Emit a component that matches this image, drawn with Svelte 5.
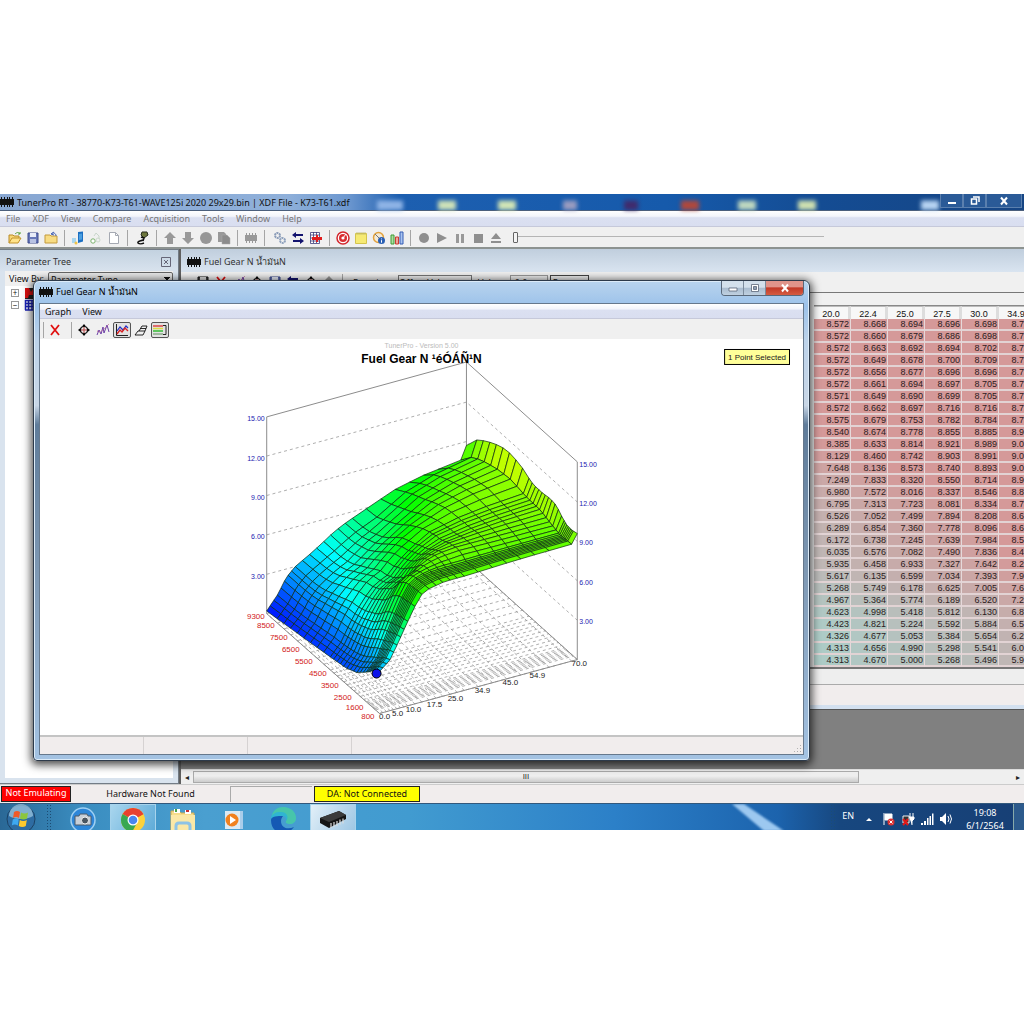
<script>
  const menus = ['File', 'XDF', 'View', 'Compare', 'Acquisition', 'Tools', 'Window', 'Help'];

  const toolGroups = [
    { icons: ['open', 'save', 'folder'] },
    { icons: ['compare', 'recycle', 'page'], wide: true },
    { icons: ['plug'] },
    { icons: ['up', 'down', 'disc', 'copy'] },
    { icons: ['chip'], wide: true },
    { icons: ['gears', 'swap', 'gridred'] },
    { icons: ['target', 'note', 'gauge', 'bars'] },
    { icons: ['record', 'play', 'pause', 'stop', 'eject'] }
  ];

  const headers = ['20.0', '22.4', '25.0', '27.5', '30.0', '34.9'];
  const cells = [
    [8.572, 8.668, 8.694, 8.696, 8.698, 8.727],
    [8.572, 8.66, 8.679, 8.686, 8.698, 8.727],
    [8.572, 8.663, 8.692, 8.694, 8.702, 8.727],
    [8.572, 8.649, 8.678, 8.7, 8.709, 8.727],
    [8.572, 8.656, 8.677, 8.696, 8.696, 8.716],
    [8.572, 8.661, 8.694, 8.697, 8.705, 8.727],
    [8.571, 8.649, 8.69, 8.699, 8.705, 8.716],
    [8.572, 8.662, 8.697, 8.716, 8.716, 8.727],
    [8.575, 8.679, 8.753, 8.782, 8.784, 8.784],
    [8.54, 8.674, 8.778, 8.855, 8.885, 8.967],
    [8.385, 8.633, 8.814, 8.921, 8.989, 9.064],
    [8.129, 8.46, 8.742, 8.903, 8.991, 9.091],
    [7.648, 8.136, 8.573, 8.74, 8.893, 9.017],
    [7.249, 7.833, 8.32, 8.55, 8.714, 8.967],
    [6.98, 7.572, 8.016, 8.337, 8.546, 8.827],
    [6.795, 7.313, 7.723, 8.081, 8.334, 8.716],
    [6.526, 7.052, 7.499, 7.894, 8.208, 8.627],
    [6.289, 6.854, 7.36, 7.778, 8.096, 8.627],
    [6.172, 6.738, 7.245, 7.639, 7.984, 8.527],
    [6.035, 6.576, 7.082, 7.49, 7.836, 8.464],
    [5.935, 6.458, 6.933, 7.327, 7.642, 8.267],
    [5.617, 6.135, 6.599, 7.034, 7.393, 7.967],
    [5.268, 5.749, 6.178, 6.625, 7.005, 7.627],
    [4.967, 5.364, 5.774, 6.189, 6.52, 7.217],
    [4.623, 4.998, 5.418, 5.812, 6.13, 6.827],
    [4.423, 4.821, 5.224, 5.592, 5.884, 6.527],
    [4.326, 4.677, 5.053, 5.384, 5.654, 6.267],
    [4.313, 4.656, 4.99, 5.298, 5.541, 6.017],
    [4.313, 4.67, 5.0, 5.268, 5.496, 5.927]
  ];

  function cellColor(v) {
    const t = Math.max(0, Math.min(1, (v - 4.2) / 4.3));
    const mix = (a, b, c) => (t < 0.4 ? a + ((b - a) * t) / 0.4 : b + ((c - b) * (t - 0.4)) / 0.6);
    return `rgb(${mix(172, 191, 213) | 0},${mix(205, 184, 153) | 0},${mix(200, 182, 153) | 0})`;
  }

  // Fuel surface: load runs along u, engine speed along v.
  const rpms = [800, 1100, 1200, 1300, 1400, 1500, 1600, 1700, 1800, 2000, 2250, 2500, 2750, 3000, 3250,
    3500, 3750, 4000, 4250, 4500, 5000, 5500, 6000, 6500, 7000, 7500, 8000, 8500, 9300];
  const loads = [0, 1.2, 2.5, 3.7, 5, 6.2, 7.5, 8.7, 10, 12.5, 15, 17.5, 20, 22.4, 25, 27.5, 30, 34.9,
    40, 45, 50, 54.9, 60, 68, 70];

  function lerp(points, x) {
    if (x <= points[0][0]) return points[0][1];
    for (let i = 1; i < points.length; i++) {
      if (x <= points[i][0]) {
        const [x0, y0] = points[i - 1];
        const [x1, y1] = points[i];
        return y0 + ((y1 - y0) * (x - x0)) / (x1 - x0);
      }
    }
    return points[points.length - 1][1];
  }

  const idle = [[0, 3.2], [0.05, 2.9], [0.1, 2.4], [0.2, 1.6], [0.3, 1.2], [0.6, 0.75], [1, 0.2]];
  const inner = [[0, 8.9], [0.1, 8.8], [0.19, 9.05], [0.28, 9.35], [0.41, 9.4], [0.55, 9.66], [0.68, 9.5],
    [0.82, 9.1], [0.91, 8.6], [1, 7.7]];
  const crest = [[0, 9.6], [0.045, 9.5], [0.09, 9.5], [0.135, 9.8], [0.19, 10.3], [0.24, 10.4], [0.31, 10.3],
    [0.38, 10.3], [0.42, 10.4], [0.51, 10.9], [0.6, 11.1], [0.69, 11], [0.78, 10.6], [0.87, 10.1], [0.95, 9.5], [1, 8.7]];
  const riseSlow = [[0, 0], [0.18, 0.12], [0.32, 0.32], [0.46, 0.54], [0.62, 0.78], [0.75, 0.93], [0.87, 0.98], [1, 1]];
  const riseFast = [[0, 0], [0.2, 0.26], [0.34, 0.52], [0.5, 0.68], [0.78, 0.85], [1, 1]];
  const far = [[0, 0], [0.3, 0.5], [0.6, 0.78], [1, 1]];
  const known = [20, 22.4, 25, 27.5, 30, 34.9];

  function height(load, row) {
    const v = (rpms[row] - 800) / 8500;
    if (load < 20) {
      const z0 = lerp(idle, v);
      const rise = lerp(riseSlow, load / 20) * (1 - v) + lerp(riseFast, load / 20) * v;
      return z0 + (cells[row][0] - z0) * rise;
    }
    if (load <= 34.9) return lerp(known.map((k, i) => [k, cells[row][i]]), load);
    if (load === 70) return lerp(crest, v);
    const z35 = cells[row][5];
    return z35 + (lerp(inner, v) - z35) * lerp(far, (load - 34.9) / 33.1);
  }

  function project(load, rpm, z) {
    const u = load / 70;
    const v = (rpm - 800) / 8500;
    const x = 379 + 198 * u - 113 * v + 2 * u * v;
    const y = 714 - 54 * u - 100 * v - 13.15 * z;
    return [Math.round(x * 10) / 10, Math.round(y * 10) / 10];
  }

  const quads = [];
  for (let r = rpms.length - 2; r >= 0; r--) {
    for (let c = loads.length - 2; c >= 0; c--) {
      const corners = [[c, r], [c + 1, r], [c + 1, r + 1], [c, r + 1]];
      const zs = corners.map(([i, j]) => height(loads[i], j));
      const z = (zs[0] + zs[1] + zs[2] + zs[3]) / 4;
      const hue = lerp([[0, 238], [1.5, 220], [3, 200], [4.2, 180], [5.5, 155], [7, 128], [8, 112], [9, 95], [10.2, 76], [11, 66]], z);
      quads.push({
        points: corners.map(([i, j], k) => project(loads[i], rpms[j], zs[k]).join(',')).join(' '),
        fill: `hsl(${hue.toFixed(0)} 100% 50%)`
      });
    }
  }

  const line = (a, b) => ({ x1: a[0], y1: a[1], x2: b[0], y2: b[1] });
  const floorLines = [
    ...rpms.map((r) => line(project(0, r, 0), project(70, r, 0))),
    ...loads.map((l) => line(project(l, 800, 0), project(l, 9300, 0)))
  ];
  const levels = [3, 6, 9, 12, 15];
  const rpmTicks = [
    ['9300', 264, 619], ['8500', 274, 628], ['7500', 287, 640], ['6500', 299, 652], ['5500', 312, 664],
    ['4500', 326, 676], ['3500', 338, 688], ['2500', 351, 700], ['1600', 363, 710], ['800', 374, 720]
  ];
  const loadTicks = [
    ['0.0', 384, 720], ['5.0', 397, 717], ['10.0', 413, 712], ['17.5', 434, 707], ['25.0', 455, 701],
    ['34.9', 482, 693], ['45.0', 510, 685], ['54.9', 537, 678], ['70.0', 579, 666]
  ];
  const blurs = [[390, 26, '#8fb4e6'], [447, 18, '#cfe2b8'], [507, 18, '#d2e6b6'], [570, 14, '#9a9cc0'], [631, 14, '#402b6c'],
    [690, 18, '#b0483c'], [747, 18, '#bfd8c0'], [807, 18, '#cfe0b0'], [930, 18, '#b7d4f2']];
</script>

{#snippet chipIcon()}
  <svg class="chip" viewBox="0 0 14 10" aria-hidden="true"><path d="M0 2h14v6H0z" /><path d="M1 0h1v10H1zM4 0h1v10H4zM7 0h1v10H7zM9 0h1v10H9zM12 0h1v10h-1z" /></svg>
{/snippet}

{#snippet icon(name)}
  <svg class="icon" viewBox="0 0 14 14" aria-hidden="true">
    {#if name === 'open'}
      <path d="M1 12V4h4l1 1h5v2" fill="#f7d774" stroke="#b98a26" /><path d="M1 12l3-5h9l-3 5z" fill="#ffe38a" stroke="#c2922a" /><path d="M7 3c2-2 4-2 5 0M12 1v2h-2" fill="none" stroke="#57a03a" />
    {:else if name === 'save'}
      <path d="M2 2h10v10H2z" fill="#6777b8" stroke="#3c4a8c" /><path d="M4 2h6v4H4z" fill="#e8ecf8" /><path d="M4 8h6v4H4z" fill="#b8c2e2" />
    {:else if name === 'savedark'}
      <path d="M2 2h10v10H2z" fill="#444" stroke="#111" /><path d="M4 2h6v4H4z" fill="#ddd" />
    {:else if name === 'folder'}
      <path d="M1 4h5l1 1h6v7H1z" fill="#f8dc83" stroke="#c39a3c" /><path d="M7 3c2-2 5-1 5 2M10 1L7 3l3 1" fill="none" stroke="#4763b4" />
    {:else if name === 'compare'}
      <path d="M7 1l5-.5v10L7 12z" fill="#1c6fc2" /><path d="M8 3l3-.5v6L8 9z" fill="#4b9fe0" /><path d="M1 7h4v5H1z" fill="#a9d6ee" /><circle cx="5" cy="12" r="1.5" fill="#efc348" />
    {:else if name === 'recycle'}
      <path d="M5 5l2-3 3 3v3" fill="none" stroke="#c9d6cb" /><circle cx="4" cy="10" r="2.2" fill="#fff" stroke="#79b16c" /><circle cx="9" cy="9" r="2" fill="none" stroke="#ccd9cc" />
    {:else if name === 'page'}
      <path d="M2.500 1.500h6l3 3v8h-9z" fill="#fff" stroke="#a5a9b2" /><path d="M8.500 1.500v3h3" fill="none" stroke="#a5a9b2" />
    {:else if name === 'plug'}
      <path d="M6 1h5l1 3-4 3-3-3z" fill="#6c763c" stroke="#262b1d" /><path d="M5 6l3 1-1 3" fill="none" stroke="#111" stroke-width="1.500" /><path d="M7 9c-2 1-6 1-5 3 1 1 4 1 6 0" fill="none" stroke="#111" stroke-width="1.500" />
    {:else if name === 'up'}
      <path d="M7 1l6 6h-3v6H4V7H1z" fill="#999" />
    {:else if name === 'down'}
      <path d="M7 13l6-6h-3V1H4v6H1z" fill="#999" />
    {:else if name === 'disc'}
      <circle cx="7" cy="7" r="6" fill="#979797" />
    {:else if name === 'record'}
      <circle cx="7" cy="7" r="5" fill="#8f8f8f" />
    {:else if name === 'copy'}
      <path d="M1 1h6l2 2v8H1z" fill="#999" /><path d="M5 4h5l3 3v6H5z" fill="#8c8c8c" stroke="#aaa" stroke-width=".5" />
    {:else if name === 'chip'}
      <path d="M1 4h12v6H1z" fill="#999" /><path d="M2.500 2v10M5.500 2v10M8.500 2v10M11.500 2v10" stroke="#999" />
    {:else if name === 'gears'}
      <circle cx="4.500" cy="4.500" r="2.500" fill="none" stroke="#8b9cb8" stroke-width="2" stroke-dasharray="2 .6" /><circle cx="9.500" cy="9.500" r="2.500" fill="none" stroke="#8fa2bd" stroke-width="2" stroke-dasharray="2 .6" />
    {:else if name === 'swap'}
      <path d="M5 1v2h7v2H5v2L1 4zM9 7v2H2v2h7v2l4-3z" fill="#13136e" />
    {:else if name === 'gridred'}
      <path d="M1.500 1.500h9v11h-9zM1.500 4h9M1.500 7h9M1.500 10h9M4.500 1v11M7.500 1v11" fill="#fff" stroke="#3b3b78" stroke-width=".8" /><path d="M3 6h4V4h2v2h4v3H9v2H7V9H3z" fill="#e01c1c" />
    {:else if name === 'target'}
      <circle cx="7" cy="7" r="6" fill="#fff" stroke="#d3262b" stroke-width="1.500" /><circle cx="7" cy="7" r="4" fill="#d92d30" /><circle cx="7" cy="7" r="1.600" fill="#fff" /><path d="M7 7l3-4" stroke="#fff" />
    {:else if name === 'note'}
      <path d="M1.500 2.500h11v10h-11z" fill="#f6ea73" stroke="#d4c44c" /><path d="M3 1v3M5 1v3M7 1v3M9 1v3M11 1v3" stroke="#bdb76a" stroke-width=".8" />
    {:else if name === 'gauge'}
      <circle cx="6.500" cy="6.500" r="5" fill="#f4ead6" stroke="#e2a23d" stroke-width="1.500" /><path d="M3 3l5 5" stroke="#777" /><circle cx="9.500" cy="9.500" r="3.500" fill="#2a60b4" /><path d="M9.500 7.500v.8M9.500 9.200v2.500" stroke="#fff" />
    {:else if name === 'bars'}
      <path d="M1 4h3v9H1z" fill="#aadf9e" stroke="#3e9a34" /><path d="M5.500 6h3v7h-3z" fill="#f0a49a" stroke="#ca3d31" /><path d="M10 1h3v12h-3z" fill="#a9c4f0" stroke="#345cb4" />
    {:else if name === 'play'}
      <path d="M2 2l10 5-10 5z" fill="#8f8f8f" />
    {:else if name === 'pause'}
      <path d="M3 3h3v9H3zM8 3h3v9H8z" fill="#999" />
    {:else if name === 'stop'}
      <path d="M3 3h9v9H3z" fill="#8f8f8f" />
    {:else if name === 'eject'}
      <path d="M7 2l5 6H2zM2 10h10v2H2z" fill="#8f8f8f" />
    {:else if name === 'redx'}
      <path d="M3 2l8 10M11 2L3 12" stroke="#e01010" stroke-width="1.800" />
    {:else if name === 'move'}
      <circle cx="7" cy="7" r="3.500" fill="none" stroke="#111" stroke-width="1.200" /><path d="M7 4v6M4 7h6" stroke="#b34040" /><path d="M7 1l2 2.500H5zM7 13l2-2.500H5zM1 7l2.500-2v4zM13 7l-2.500-2v4z" fill="#000" />
    {:else if name === 'scribble'}
      <path d="M1 12l2-5 2 4 2-7 1 6 3-8 2 7" fill="none" stroke="#6c3fa6" /><path d="M1 8l3 1 3-2 3-3 3-3" fill="none" stroke="#c26a96" stroke-dasharray="1 1" />
    {:else if name === 'chart'}
      <path d="M1.500 1v11.500H13" fill="none" stroke="#222" /><path d="M2 8l3-4 3 3 3-4 2 2" fill="none" stroke="#2130c8" stroke-width="1.200" /><path d="M2 11l3-4 2 2 3-4 3 3" fill="none" stroke="#d82222" stroke-width="1.400" />
    {:else if name === 'plane'}
      <path d="M1 12l3-4h7l-2 4zM5 8l3-5h5l-2 5M6.500 5.500H12" fill="none" stroke="#111" stroke-width=".9" />
    {:else if name === 'legend'}
      <path d="M0 3h10" stroke="#d44" stroke-width="1.500" /><path d="M0 5.500h10" stroke="#dd4" stroke-width="1.500" /><path d="M0 8h10" stroke="#3b3" stroke-width="1.500" /><path d="M0 11h10" stroke="#8a8" stroke-width="1.500" /><path d="M10 2.500h3v9h-3" fill="none" stroke="#222" />
    {/if}
  </svg>
{/snippet}

<main class="page">
  <div class="screen">
    <header class="titlebar">
      <svg class="wallpaper" viewBox="0 0 1024 17" preserveAspectRatio="none" aria-hidden="true">
        {#each blurs as [x, w, fill]}
          <rect x={x - w / 2} y="7" width={w} height="12" {fill} />
        {/each}
      </svg>
      {@render chipIcon()}
      <h1>TunerPro RT - 38770-K73-T61-WAVE125i 2020 29x29.bin | XDF File - K73-T61.xdf</h1>
      <div class="caption-buttons">
        <button aria-label="Minimize"><svg viewBox="0 0 12 10"><path d="M2 6h8v2H2z" fill="#fff" /></svg></button>
        <button aria-label="Restore"><svg viewBox="0 0 12 10"><path d="M4 1h6v5M2.500 3h5v5h-5z" fill="none" stroke="#fff" stroke-width="1.500" /></svg></button>
        <button class="big" aria-label="Close"><svg viewBox="0 0 12 10"><path d="M3 1.500l6 7M9 1.500l-6 7" stroke="#fff" stroke-width="2" /></svg></button>
      </div>
    </header>

    <nav class="menubar main-menu" aria-label="Main">
      {#each menus as m}<button>{m}</button>{/each}
    </nav>

    <div class="toolbar main-tools">
      {#each toolGroups as g, i}
        {#if i > 0}<span class="sep" class:wide={toolGroups[i - 1].wide}></span>{/if}
        {#each g.icons as name}<button class="tool" aria-label={name}>{@render icon(name)}</button>{/each}
      {/each}
      <input class="seek" type="range" min="0" max="100" value="0" aria-label="Playback position" />
    </div>

    <div class="workspace">
      <aside class="tree">
        <div class="tree-head"><h2>Parameter Tree</h2><button aria-label="Close panel"><svg viewBox="0 0 10 10"><path d="M.5.5h9v9h-9zM3 3l4 4M7 3L3 7" fill="none" stroke="#667" /></svg></button></div>
        <div class="tree-body">
          <div class="view-by">
            <label for="viewby">View By:</label>
            <select id="viewby"><option>Parameter Type</option></select>
          </div>
          <ul>
            <li><span class="box">+</span><svg viewBox="0 0 14 12"><path d="M1 1h10v11H1z" fill="#222" /><path d="M1 1h4l2 4 2-3v6H5l-1 3H1z" fill="#d11" /></svg></li>
            <li><span class="box">−</span><svg viewBox="0 0 14 12"><path d="M1 1h12v11H1z" fill="#fff" /><path d="M1 1.500h12M1 4.500h12M1 7.500h12M1 11h12M1.500 1v10M4.500 1v10M8 1v10M11 1v10" stroke="#1b23b8" stroke-width="1.500" /></svg></li>
          </ul>
        </div>
      </aside>

      <section class="mdi">
        <div class="child">
          <div class="child-title">{@render chipIcon()}<h2>Fuel Gear N น้ำมันN</h2></div>
          <div class="toolbar child-tools">
            {#each ['savedark', 'redx', 'scribble', 'move', 'save', 'swap', 'move', 'up'] as name}
              <button class="tool" aria-label={name}>{@render icon(name)}</button>
            {/each}
            <span class="sep"></span>
            <label for="fn">Function:</label>
            <select id="fn"><option>Offset Value</option></select>
            <label for="val">Value:</label>
            <input id="val" value="0.0" />
            <button class="exec">Execute</button>
          </div>
          <div class="table-wrap">
            <table>
              <thead><tr>{#each headers as h}<th>{h}</th>{/each}</tr></thead>
              <tbody>
                {#each cells as row}
                  <tr>{#each row as v}<td style:background={cellColor(v)}>{v.toFixed(3)}</td>{/each}</tr>
                {/each}
              </tbody>
            </table>
          </div>
          <div class="child-foot"></div>
          <div class="child-status"></div>
        </div>
        <div class="hscroll" aria-hidden="true"><span class="arrow">◂</span><span class="thumb">ııı</span><span class="arrow end">▸</span></div>
      </section>
    </div>

    <footer class="status">
      <span class="emu">Not Emulating</span>
      <span class="hw">Hardware Not Found</span>
      <span class="empty"></span>
      <span class="da">DA: Not Connected</span>
    </footer>

    <div class="taskbar">
      <svg class="streak" viewBox="0 0 140 27" aria-hidden="true"><path d="M52 0h12l40 27H84z" fill="#9cc8f0" /></svg>
      <button class="orb" aria-label="Start">
        <svg viewBox="0 0 30 30">
          <circle cx="15" cy="15" r="14" fill="#2e6ca2" stroke="#1c4265" /><path d="M3 12a12 12 0 0 1 24 0c-6 4-18 4-24 0z" fill="#9cc6df" opacity=".75" />
          <path d="M8 8c2-1.500 4-1.500 6 0l-1 6c-2-1.300-4-1.300-6 0z" fill="#ef5a29" /><path d="M15 8.500c2 1.300 5 1.300 7 0l-1 6c-2 1.300-5 1.300-7 0z" fill="#8cc63e" />
          <path d="M6.800 15.500c2-1.300 4-1.300 6 0l-1 6c-2-1.300-4-1.300-6 0z" fill="#3fa9f0" /><path d="M13.800 16c2 1.300 5 1.300 7 0l-1 6c-2 1.300-5 1.300-7 0z" fill="#fdc92e" />
        </svg>
      </button>
      <span class="grip"></span>
      <div class="tasks">
        <button aria-label="Camera">
          <svg viewBox="0 0 30 30"><circle cx="15" cy="15" r="12" fill="#2d86d8" stroke="#9fd0f2" stroke-width="1.500" /><path d="M7 11h4l1-2h7l1 2h3v9H7z" fill="#c7cfd8" stroke="#4d5a68" /><circle cx="17" cy="15.500" r="3.500" fill="#4b5661" stroke="#eee" /></svg>
        </button>
        <button class="active" aria-label="Chrome">
          <svg viewBox="0 0 30 30"><circle cx="15" cy="15" r="12" fill="#fdd23c" /><path d="M15 15L4.600 9A12 12 0 0 1 25.400 9z" fill="#e8412f" /><path d="M15 15L4.600 9a12 12 0 0 0 9.400 18l5-9z" fill="#38a852" /><path d="M14 9h11.400L15 15z" fill="#e8412f" /><circle cx="15" cy="15" r="5.500" fill="#fff" /><circle cx="15" cy="15" r="4.300" fill="#4a86ee" /></svg>
        </button>
        <button aria-label="Explorer">
          <svg viewBox="0 0 30 30"><path d="M3 6h8l2 2h13v22H3z" fill="#f5dc8b" stroke="#d1ac52" /><path d="M6 4h6v4H6zM17 5h6v4h-6z" fill="#fff" /><path d="M7 4h2v3H7z" fill="#48a34a" /><path d="M18 5h3v2h-3z" fill="#c33" /><path d="M3 10h24v16H3z" fill="#fbe8a7" /><path d="M8 28v-7q0-3 3-3h8q3 0 3 3v7" fill="none" stroke="#8ec3e6" stroke-width="3" /></svg>
        </button>
        <button aria-label="Media Player">
          <svg viewBox="0 0 30 30"><path d="M11 6h14v18H11z" fill="#a9cdea" /><path d="M7 6h15v18H7z" fill="#dceaf4" /><circle cx="14" cy="15" r="6.500" fill="#f0811f" /><path d="M12 11l6 4-6 4z" fill="#fff" /></svg>
        </button>
        <button aria-label="Edge">
          <svg viewBox="0 0 30 30"><path d="M3 15C3 7 8 2 15 2c8 0 13 5 13 11 0 4-3 6-6 6-3 0-5-1-4-3 1-2 0-5-4-5-5 0-10 4-8 11z" fill="#2fb5d2" /><path d="M15 2c8 0 13 5 13 11 0 4-3 6-6 6-3 0-5-1-4-3 3-3 2-10-7-9-3 0-6 2-7 4C5 5 10 2 15 2z" fill="#4dc9a0" opacity=".8" /><path d="M3 15c0 9 6 13 12 13 5 0 9-3 11-6-6 3-13 1-13-6 0-2 1-4 2-5-5 0-12 0-12 4z" fill="#1559b4" /></svg>
        </button>
        <button class="active strong" aria-label="TunerPro">
          <svg viewBox="0 0 30 30"><path d="M2 13L21 6l7 4v4L11 23l-9-5z" fill="#151515" /><path d="M2 13L21 6l7 4-17 7z" fill="#3b3b3b" /><path d="M13 18v5M16 17v5M19 16v5M22 14.500v5M25 13.500v5" stroke="#ddd" stroke-width="1.200" /></svg>
        </button>
      </div>
      <div class="tray">
        <span class="grip"></span>
        <span class="lang">EN</span>
        <svg class="tri" viewBox="0 0 8 8"><path d="M1 6h6L4 3z" fill="#fff" /></svg>
        <svg viewBox="0 0 14 14"><path d="M2 1v12M3 2h7v6H3z" fill="#fff" stroke="#fff" /><circle cx="9" cy="10" r="3.500" fill="#d33" /><path d="M7.500 8.500l3 3M10.500 8.500l-3 3" stroke="#fff" /></svg>
        <svg viewBox="0 0 14 14"><path d="M2 4h6v7H2z" fill="#333" stroke="#eee" /><path d="M9 1v4M12 1v4M8 5h5v2l-2 2v4" fill="#fff" stroke="#fff" /><path d="M2 7l5 6M7 7l-5 6" stroke="#e01818" stroke-width="2" /></svg>
        <svg viewBox="0 0 14 14"><path d="M1 11h2v2H1zM4 9h2v4H4zM7 6h1.500v7H7zM9.500 4H11v9H9.500zM12 1.500h1.500V13H12z" fill="#fff" /></svg>
        <svg viewBox="0 0 14 14"><path d="M1 5h2l4-4v12L3 9H1z" fill="#fff" /><path d="M9 4q2 3 0 6M11 2.500q3 4.500 0 9" fill="none" stroke="#fff" /></svg>
        <time><span>19:08</span><span>6/1/2564</span></time>
        <span class="peek"></span>
      </div>
    </div>

    <section class="window">
      <div class="window-title">
        {@render chipIcon()}
        <h2>Fuel Gear N น้ำมันN</h2>
        <div class="win-buttons">
          <button aria-label="Minimize"><svg viewBox="0 0 12 10"><path d="M2 5h8v3H2z" fill="#fff" stroke="#5a6678" stroke-width=".8" /></svg></button>
          <button aria-label="Maximize"><svg viewBox="0 0 12 10"><path d="M2.500 1.500h7v7h-7z" fill="#fff" stroke="#5a6678" stroke-width=".8" /><path d="M4.500 3.500h3v3h-3z" fill="#8fa0b4" stroke="#5a6678" stroke-width=".8" /></svg></button>
          <button class="close" aria-label="Close"><svg viewBox="0 0 12 10"><path d="M3 1.500l6 7M9 1.500l-6 7" stroke="#fff" stroke-width="2" /></svg></button>
        </div>
      </div>
      <div class="window-body">
        <nav class="menubar" aria-label="Graph"><button>Graph</button><button>View</button></nav>
        <div class="toolbar graph-tools">
          <span class="sep"></span>
          <button class="tool" aria-label="Close graph">{@render icon('redx')}</button>
          <span class="sep far"></span>
          <button class="tool" aria-label="Move">{@render icon('move')}</button>
          <button class="tool" aria-label="Trace">{@render icon('scribble')}</button>
          <button class="tool pressed" aria-label="Lines">{@render icon('chart')}</button>
          <button class="tool" aria-label="Plane">{@render icon('plane')}</button>
          <button class="tool pressed" aria-label="Legend">{@render icon('legend')}</button>
        </div>
        <svg class="plot" viewBox="39 339 764 397" role="img" aria-label="Fuel Gear N surface">
          <g class="grid">
            {#each floorLines as l}<line {...l} />{/each}
            {#each levels.slice(0, 4) as z}
              {@const a = project(0, 9300, z)}{@const b = project(70, 9300, z)}{@const c = project(70, 800, z)}
              <polyline points="{a} {b} {c}" />
            {/each}
          </g>
          <path class="frame" d="M266 614V417L466 362L577 462V660L379 714L266 614M466 362V560L577 660" />
          <g class="mesh">{#each quads as q}<polygon points={q.points} fill={q.fill} />{/each}</g>
          <circle cx="376" cy="674" r="4.500" fill="#0b12e8" stroke="#000" />
          <g class="zt">
            {#each levels as z}
              <text x="264" y={618.500 - z * 13.150} text-anchor="end">{z.toFixed(2)}</text>
              <text x="579" y={664 - z * 13.150}>{z.toFixed(2)}</text>
            {/each}
          </g>
          <g class="rt">{#each rpmTicks as [t, x, y]}<text {x} {y} text-anchor="end">{t}</text>{/each}</g>
          <g class="lt">{#each loadTicks as [t, x, y]}<text {x} {y} text-anchor="middle">{t}</text>{/each}</g>
          <text class="mark" x="421" y="348" text-anchor="middle">TunerPro - Version 5.00</text>
          <text class="name" x="421" y="363" text-anchor="middle">Fuel Gear N ¹éÓÁÑ¹N</text>
          <rect x="724.500" y="349.500" width="65" height="15" fill="#ffff99" stroke="#000" />
          <text class="sel" x="757" y="360" text-anchor="middle">1 Point Selected</text>
        </svg>
        <div class="window-status"><span></span><span></span><span></span><i></i></div>
      </div>
    </section>
  </div>
</main>

<style>
  :global(body) { margin: 0; background: #fff; }
  .page { min-height: 100vh; display: flex; align-items: center; font-family: "Noto Sans", "Open Sans", sans-serif; font-size: 9px; color: #111; }
  .page * { box-sizing: border-box; }
  button, select, input { font: inherit; color: inherit; padding: 0; margin: 0; border: 0; background: none; border-radius: 0; }
  h1, h2 { margin: 0; font-size: 9px; font-weight: 400; white-space: nowrap; }
  svg { display: block; }
  .screen { position: relative; flex: 1; min-width: 0; overflow: hidden; display: flex; flex-direction: column; }

  .titlebar { position: relative; height: 17px; display: flex; align-items: center; gap: 3px; border-bottom: 1px solid #4b5f7c; background: linear-gradient(90deg, #88a7d2 0, #8fb0da 28%, #6c97cf 34%, #1d5fb0 39%, #165aab 65%, #144c93 80%, #164584 100%); }
  .wallpaper { position: absolute; inset: 0; width: 100%; height: 100%; filter: blur(2px); }
  .titlebar > .chip, .titlebar h1, .caption-buttons { position: relative; }
  .chip { width: 14px; height: 10px; flex: none; fill: #111; }
  .caption-buttons { margin-left: auto; align-self: flex-start; display: flex; margin-right: 2px; }
  .caption-buttons button { width: 23px; height: 14px; display: grid; place-items: center; border: 1px solid #5a7fae; border-top: 0; background: #2a5a97; }
  .caption-buttons .big { width: 36px; }
  .caption-buttons svg, .win-buttons svg { width: 12px; height: 10px; }

  .menubar { display: flex; align-items: center; height: 15px; background: linear-gradient(#fff 0, #f3f5fb 35%, #dbe0f1 45%, #d9def0); border-bottom: 1px solid #c6c9da; }
  .main-menu { height: 16px; gap: 12px; padding-left: 6px; color: #777; }
  .toolbar { display: flex; align-items: center; background: #f0f0f0; }
  .main-tools { height: 22px; padding: 1px 200px 0 6px; border-bottom: 2px solid #8d9391; }
  .tool { width: 18px; height: 16px; flex: none; display: grid; place-items: center; }
  .icon { width: 14px; height: 14px; }
  .sep { width: 9px; height: 16px; flex: none; background: linear-gradient(90deg, #a5a5a5 0 1px, transparent 0) 4px 0 no-repeat; }
  .sep.wide { width: 11px; }
  .seek { appearance: none; flex: 1; min-width: 0; margin-left: 8px; height: 14px; background: linear-gradient(#b5b5b5, #b5b5b5) 0 5px / 100% 1px no-repeat; }
  .seek::-webkit-slider-thumb { appearance: none; width: 5px; height: 11px; border: 1px solid #666; border-radius: 1px; background: #f4f4f4; }

  .workspace { display: flex; height: 535px; }
  .tree { width: 179px; flex: none; display: flex; flex-direction: column; background: linear-gradient(#c3d2e0, #d9e3ee 22px); border: 1px solid #737c86; border-left: 0; padding: 0 5px 5px; }
  .tree-head { height: 21px; padding: 2px 2px 0 1px; display: flex; justify-content: space-between; align-items: center; color: #333; }
  .tree-head svg { width: 10px; height: 10px; }
  .tree-body { flex: 1; background: #fff; }
  .view-by { display: flex; align-items: center; gap: 4px; height: 15px; padding-left: 4px; background: #f0f0f0; white-space: nowrap; }
  select { appearance: none; }
  .view-by select { flex: 1; min-width: 0; height: 13px; border: 1px solid #666; border-radius: 2px; padding-left: 2px; background: linear-gradient(to bottom left, #111 50%, transparent 50%) right 5px top 4px / 3px 4px no-repeat, linear-gradient(to bottom right, #111 50%, transparent 50%) right 2px top 4px / 3px 4px no-repeat, #e6e6e6; }
  ul { list-style: none; margin: 0; padding: 1px 0 0 6px; }
  li { display: flex; align-items: center; height: 12px; gap: 5px; }
  li svg { width: 14px; height: 12px; }
  .box { width: 8px; height: 8px; border: 1px solid #999; line-height: 5px; font-size: 8px; text-align: center; }

  .mdi { flex: 1; min-width: 0; display: flex; flex-direction: column; background: #808080; border-left: 2px solid #606060; }
  .child { border-bottom: 1px solid #555; background: #f0f0f0; overflow: hidden; }
  .child-title { height: 23px; padding: 3px 6px 0; display: flex; align-items: center; gap: 3px; color: #333; background: linear-gradient(#c0cedd, #d9e4f0); }
  .child-tools { height: 21px; padding-left: 13px; border-bottom: 1px solid #777; }
  .child-tools label { margin: 0 6px; color: #222; }
  .child-tools select { width: 74px; height: 14px; border: 1px solid #777; }
  .child-tools input { width: 38px; height: 14px; border: 1px solid #999; padding-left: 4px; }
  .exec { width: 39px; height: 14px; border: 1px solid #444; margin-left: 2px; }
  .table-wrap { padding: 12px 0 0 633px; border-bottom: 2px solid #777; }
  table { border-collapse: separate; border-spacing: 0; table-layout: fixed; width: 222px; font: 9px/10px "Liberation Sans", sans-serif; border-top: 1px solid #888; }
  th { height: 13px; padding: 2px 0 0; font-weight: 400; text-align: center; border-top: 1px solid #bbb; background: #f7f7f7; border-right: 3px solid #ddd; line-height: 9px; }
  td { height: 12px; padding: 0 1px 0 0; text-align: right; border-right: 1px solid #e6d9da; border-bottom: 2px solid #e2d3d4; color: #2c1b1d; }
  .child-foot { height: 16px; border-bottom: 1px solid #aaa; background: #eee; }
  .child-status { height: 24px; background: #f1eded; border-bottom: 4px solid #d3e0ef; }
  .hscroll { margin-top: auto; height: 15px; display: flex; align-items: center; background: #efefef; border-top: 1px solid #ddd; color: #222; font-family: "DejaVu Sans", sans-serif; font-size: 8px; }
  .hscroll .arrow { width: 12px; text-align: center; }
  .hscroll .arrow.end { margin-left: auto; }
  .thumb { width: 79%; height: 12px; line-height: 9px; text-align: center; border: 1px solid #aaa; background: linear-gradient(#eee 40%, #ccc); }

  .status { height: 19px; display: flex; align-items: flex-start; padding: 1px 0 0 1px; background: #f1eded; border-top: 1px solid #ccc; }
  .status span { height: 16px; line-height: 14px; text-align: center; white-space: nowrap; flex: none; }
  .status .emu { width: 70px; background: #f00; color: #fff; border: 1px solid #222; line-height: 12px; }
  .status .hw { width: 159px; line-height: 16px; }
  .empty { width: 82px; border: 1px solid #aaa; border-width: 1px 0 0 1px; margin-right: 2px; }
  .da { width: 106px; background: #ff0; border: 1px solid #222; }

  .taskbar { position: relative; height: 27px; display: flex; overflow: hidden; border-top: 1px solid #32587c; background: linear-gradient(90deg, #2a6896 0, #3a8dc0 8%, #4a9fd0 20%, #419bd0 40%, #2c80c8 60%, #1c63ad 76%, #17477f 82%, #173f75 100%); color: #fff; }
  .streak { position: absolute; left: 680px; top: 0; width: 140px; height: 27px; filter: blur(1px); }
  .taskbar button { display: flex; justify-content: center; flex: none; }
  .taskbar button svg { width: 30px; height: 30px; }
  .orb { width: 42px; }
  .grip { width: 7px; height: 26px; flex: none; background: radial-gradient(circle, #1c4c74 1px, transparent 1px) 0 0 / 3px 3px; }
  .orb + .grip { margin: 0 7px 0 4px; }
  .tasks { display: flex; gap: 4px; }
  .tasks button { width: 46px; height: 27px; border: 1px solid transparent; }
  .tasks .active { border-color: #a6d3ec; background: linear-gradient(120deg, #a9d6ee, #5fabd8); }
  .tasks .strong { background: linear-gradient(120deg, #e2eff8, #9ec7e4); }
  .tray { position: relative; margin-left: auto; display: flex; align-items: center; gap: 5px; }
  .tray svg { width: 14px; height: 14px; margin-top: 4px; }
  .tray .tri { width: 8px; height: 8px; margin-right: 4px; }
  .lang { margin-right: 6px; margin-bottom: 3px; }
  time { width: 46px; margin-left: 4px; display: flex; flex-direction: column; text-align: center; line-height: 13px; padding-top: 3px; }
  .peek { width: 11px; height: 27px; border-left: 1px solid #8aa; background: #2c5a8c; }

  .window { position: absolute; left: 33px; right: 214px; top: 86px; padding: 0 5px 5px; border: 1px solid #2d3a4a; border-radius: 6px 6px 4px 4px; background: linear-gradient(#b9d4ee 0, #9cc2ea 25px, #bdd3ea 60px, #c8d6e6 26%, #5f7c9a 30%, #7e98b3 60%, #a4c3e3 100%); box-shadow: 0 2px 9px 2px rgba(0, 0, 0, .7), inset 0 0 0 1px #dcebf8; }
  .window-title { height: 22px; display: flex; align-items: center; gap: 3px; color: #000; }
  .win-buttons { margin-left: auto; align-self: flex-start; display: flex; border: 1px solid #59687a; border-top: 0; border-radius: 0 0 4px 4px; overflow: hidden; }
  .win-buttons button { width: 22px; height: 14px; display: grid; place-items: center; background: linear-gradient(#d3e0ec 45%, #a9bccf 50%, #c0d0e0); border-right: 1px solid #7c8b9c; }
  .win-buttons .close { width: 37px; border: 0; background: linear-gradient(#e0948a 40%, #c23a28 50%, #d55c42); }
  .window-body { border: 1px solid #66788c; background: #fff; }
  .window-body .menubar { gap: 11px; padding-left: 5px; }
  .graph-tools { height: 20px; gap: 1px; padding-top: 1px; }
  .graph-tools .sep { width: 5px; background-position: 3px 0; }
  .graph-tools .far { width: 9px; background-position: 6px 0; }
  .graph-tools .pressed { border: 1px solid #555; border-radius: 2px; background: #e2e2e2; }
  .plot { width: 100%; font-family: "Liberation Sans", sans-serif; font-size: 8px; }
  .grid { fill: none; stroke: #999; stroke-width: .8; stroke-dasharray: 3 3; }
  .frame { fill: none; stroke: #8c8c8c; stroke-width: 1; }
  .mesh { stroke: #0a2a10; stroke-width: .7; stroke-linejoin: round; }
  .zt { fill: #1a1ab0; font-size: 7px; }
  .rt { fill: #d22020; }
  .lt { fill: #222; }
  .mark { fill: #bbb; font-size: 7px; }
  .name { fill: #000; font-size: 12px; font-weight: 700; }
  .sel { fill: #222; }
  .window-status { position: relative; display: flex; height: 19px; border-top: 2px solid #c4c4c4; background: #f1eded; }
  .window-status span { width: 104px; border-right: 1px solid #d6d2d2; }
  .window-status i { position: absolute; right: 2px; bottom: 2px; width: 8px; height: 8px; background: radial-gradient(circle, #aaa 1px, transparent 1px) 0 0 / 3px 3px; clip-path: polygon(100% 0, 100% 100%, 0 100%); }
</style>
